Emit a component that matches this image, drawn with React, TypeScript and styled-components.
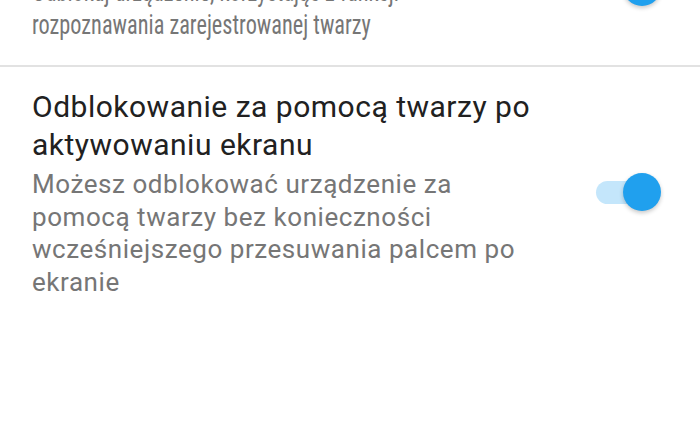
import React from 'react';
import styled, { createGlobalStyle, css } from 'styled-components';

const GlobalStyle = createGlobalStyle`
  html, body {
    margin: 0;
    padding: 0;
    background: #ffffff;
  }
  body {
    font-family: Roboto, "Noto Sans", "Liberation Sans", sans-serif;
    -webkit-font-smoothing: antialiased;
  }
`;

interface Setting {
  title: string;
  summary: string;
  enabled: boolean;
  condensed?: boolean;
}

const settings: Setting[] = [
  {
    title: 'Odblokowanie twarzą',
    summary:
      'Odblokuj urządzenie, korzystając z funkcji rozpoznawania zarejestrowanej twarzy',
    enabled: true,
    condensed: true,
  },
  {
    title: 'Odblokowanie za pomocą twarzy po aktywowaniu ekranu',
    summary:
      'Możesz odblokować urządzenie za pomocą twarzy bez konieczności wcześniejszego przesuwania palcem po ekranie',
    enabled: true,
  },
];

const Screen = styled.div`
  height: 441px;
  overflow: hidden;
  background: #ffffff;
`;

// list is scrolled so the first row sits partly above the top edge
const List = styled.div`
  margin-top: -87px;
`;

const Row = styled.div<{ $divider: boolean }>`
  display: flex;
  align-items: center;
  gap: 24px;
  padding: 21px 38px 23px 32px;
  border-bottom: ${(p) => (p.$divider ? '2px solid #e2e2e2' : 'none')};
`;

const TextBlock = styled.div`
  flex: 1;
  min-width: 0;
`;

const Title = styled.div`
  font-size: 30px;
  line-height: 38px;
  letter-spacing: 0.5px;
  color: #212121;
  max-width: 510px;
`;

const condensedSummary = css`
  font-size: 27px;
  line-height: 33px;
  letter-spacing: 0;
  font-stretch: 75%;
  max-width: 460px;
  transform: scaleX(0.825);
  transform-origin: left center;
`;

const Summary = styled.div<{ $condensed?: boolean }>`
  margin-top: 4px;
  font-size: 26px;
  line-height: 32.5px;
  letter-spacing: 0.55px;
  color: #767676;
  max-width: 495px;
  ${(p) => p.$condensed && condensedSummary}
`;

const Switch = styled.div`
  position: relative;
  flex: none;
  width: 66px;
  height: 40px;
`;

const Track = styled.div<{ $on: boolean }>`
  position: absolute;
  left: 0;
  top: 8px;
  width: 56px;
  height: 23px;
  border-radius: 12px;
  background: ${(p) => (p.$on ? '#c4e6fb' : '#d6d6d6')};
`;

const Thumb = styled.div<{ $on: boolean }>`
  position: absolute;
  top: 0;
  left: ${(p) => (p.$on ? '27px' : '0')};
  width: 38px;
  height: 38px;
  border-radius: 50%;
  background: ${(p) => (p.$on ? '#20a0ee' : '#f5f5f5')};
  box-shadow: 0 2px 4px rgba(0, 0, 0, 0.22);
`;

export default function App() {
  return (
    <Screen>
      <GlobalStyle />
      <List>
        {settings.map((item, index) => (
          <Row key={index} $divider={index < settings.length - 1}>
            <TextBlock>
              <Title>{item.title}</Title>
              <Summary $condensed={item.condensed}>{item.summary}</Summary>
            </TextBlock>
            <Switch>
              <Track $on={item.enabled} />
              <Thumb $on={item.enabled} />
            </Switch>
          </Row>
        ))}
      </List>
    </Screen>
  );
}
